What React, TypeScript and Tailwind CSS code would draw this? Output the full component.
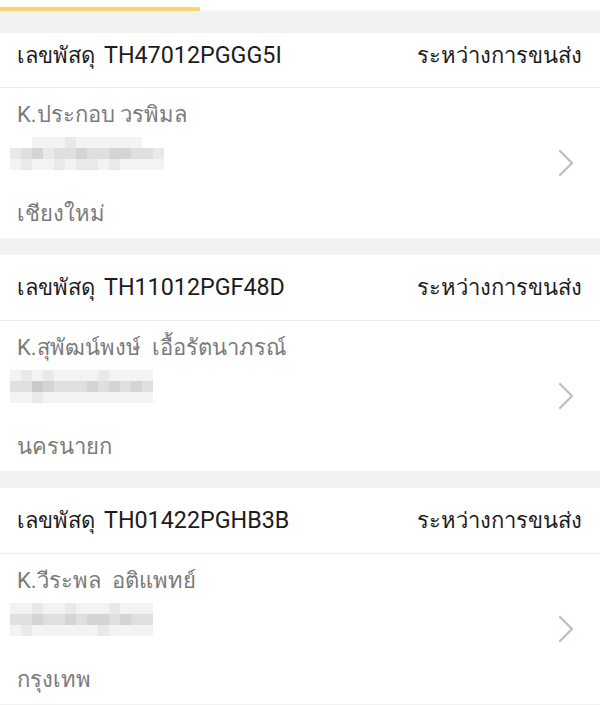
type Parcel = {
  id: string;
  status: string;
  name: string;
  city: string;
  mosaic: string[][];
};

const A = "bg-[#f3f3f3]";
const B = "bg-[#e9e9e9]";
const C = "bg-[#dfdfdf]";
const D = "bg-[#d4d4d4]";
const E = "bg-[#c9c9c9]";
const W = "bg-white";

const parcels: Parcel[] = [
  {
    id: "TH47012PGGG5I",
    status: "ระหว่างการขนส่ง",
    name: "K.ประกอบ วรพิมล",
    city: "เชียงใหม่",
    mosaic: [
      [W, W, A, A, A, B, A, A, A, A, A, A, W, W, W],
      [B, C, D, B, C, C, D, C, C, D, D, C, C, B, W],
      [A, B, A, A, B, A, B, B, A, B, A, A, A, A, W],
    ],
  },
  {
    id: "TH11012PGF48D",
    status: "ระหว่างการขนส่ง",
    name: "K.สุพัฒน์พงษ์  เอื้อรัตนาภรณ์",
    city: "นครนายก",
    mosaic: [
      [A, B, A, B, A, A, A, A, B, A, A, A, A],
      [C, C, E, D, C, C, C, D, C, D, C, D, C],
      [A, A, B, A, A, A, A, A, A, A, A, A, A],
    ],
  },
  {
    id: "TH01422PGHB3B",
    status: "ระหว่างการขนส่ง",
    name: "K.วีระพล  อติแพทย์",
    city: "กรุงเทพ",
    mosaic: [
      [A, A, B, A, A, B, A, A, A, B, A, A, A],
      [C, C, D, C, C, D, C, D, D, C, D, C, C],
      [A, B, A, A, A, A, A, A, B, A, A, A, A],
    ],
  },
];

// blurred address, drawn as a pixel mosaic
function Mosaic({ rows }: { rows: string[][] }) {
  return (
    <div className="flex flex-col blur-[0.6px]">
      {rows.map((row, i) => (
        <div key={i} className="flex">
          {row.map((c, j) => (
            <div key={j} className={`h-[11px] w-[11px] ${c}`} />
          ))}
        </div>
      ))}
    </div>
  );
}

function Chevron() {
  return (
    <svg viewBox="0 0 18 30" className="h-[30px] w-[18px] text-[#b7c1c7]" fill="none" stroke="currentColor" strokeWidth="2.4" strokeLinecap="round" strokeLinejoin="round">
      <path d="M3 3 15 15 3 27" />
    </svg>
  );
}

function ParcelCard({ p, first }: { p: Parcel; first?: boolean }) {
  return (
    <div className="bg-white">
      <div
        className={`flex items-center justify-between border-b border-[#ececec] pl-[17px] pr-[18px] text-[#1c1c1c] ${
          first ? "h-[55px] pb-[9px]" : "h-[66px]"
        }`}
      >
        <span className="flex items-baseline">
          <span className="text-[22px]">เลขพัสดุ</span>
          <span className="ml-[9px] text-[23.3px]">{p.id}</span>
        </span>
        <span className="text-[22px]">{p.status}</span>
      </div>
      <div className="flex h-[150px] items-center justify-between">
        <div className="flex flex-col self-stretch pl-[17px] pt-[12px] text-[22px] text-[#7a7a7a]">
          <div className="whitespace-pre leading-[30px]">{p.name}</div>
          <div className="-ml-[7px] mt-[7px] h-[33px]">
            <Mosaic rows={p.mosaic} />
          </div>
          <div className="mt-[29px] leading-[30px]">{p.city}</div>
        </div>
        <div className="mr-[25px]">
          <Chevron />
        </div>
      </div>
    </div>
  );
}

export default function App() {
  return (
    <div className="h-[705px] w-[600px] overflow-hidden bg-[#f2f2f2] font-['Roboto','Noto_Sans',sans-serif]">
      <div className="h-[11px] bg-white pt-[7px]">
        <div className="h-[4px] w-[200px] bg-[#f8d56e]" />
      </div>
      <div className="flex flex-col gap-[17px] pt-[22px]">
        {parcels.map((p, i) => (
          <ParcelCard key={p.id} p={p} first={i === 0} />
        ))}
      </div>
    </div>
  );
}
